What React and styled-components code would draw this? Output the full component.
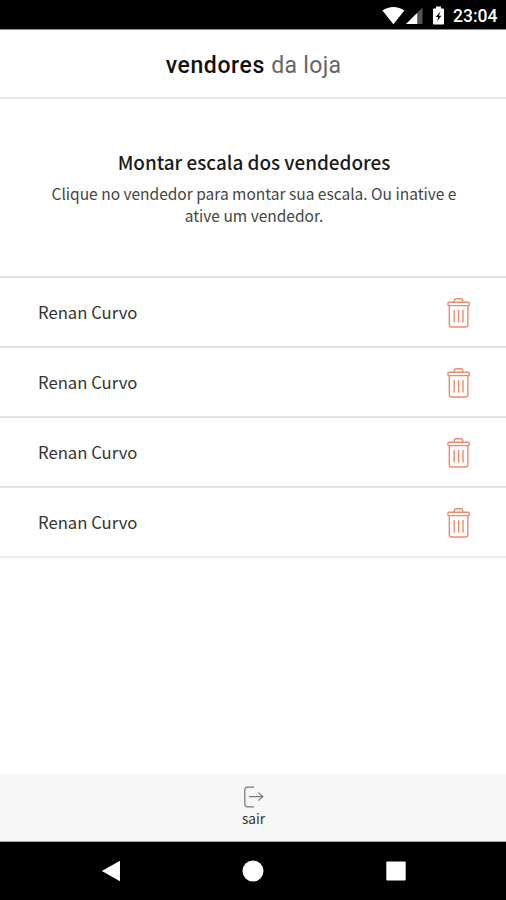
// App.jsx
import React from "react";
import styled, { createGlobalStyle } from "styled-components";

const GlobalStyle = createGlobalStyle`
  * {
    box-sizing: border-box;
  }

  body {
    margin: 0;
    background-color: #ffffff;
    font-family: "Noto Sans CJK JP", "Noto Sans", sans-serif;
  }
`;

const Screen = styled.div`
  display: flex;
  flex-direction: column;
  height: 900px;
  overflow: hidden;
`;

const StatusBar = styled.div`
  display: flex;
  align-items: center;
  justify-content: flex-end;
  height: 30px;
  padding: 2px 8px 0 0;
  background-color: #000000;
  border-bottom: 1px solid #888888;
  color: #ffffff;

  svg {
    display: block;
  }
`;

const Clock = styled.span`
  width: 45px;
  margin-left: 7px;
  font-family: Roboto, sans-serif;
  font-size: 17.5px;
  font-weight: 500;
  line-height: 20px;
  white-space: nowrap;
`;

const Header = styled.header`
  display: flex;
  align-items: center;
  justify-content: center;
  height: 69px;
  padding-top: 4px;
  border-bottom: 2px solid #e8e8e8;
`;

const Title = styled.h1`
  margin: 0 0 0 1px;
  color: #111111;
  font-family: Roboto, sans-serif;
  font-size: 23px;
  font-weight: 500;
  letter-spacing: 0.6px;
  line-height: 28px;
  white-space: nowrap;

  span {
    color: #666666;
    font-weight: 400;
    letter-spacing: 0.3px;
  }
`;

const Intro = styled.section`
  height: 177px;
  padding: 49px 40px 0;
  text-align: center;
`;

const H2 = styled.h2`
  margin: 0 0 6px 2px;
  color: #1a1a1a;
  font-size: 18.9px;
  font-weight: 500;
  line-height: 28px;
  white-space: nowrap;
`;

const P = styled.p`
  margin: 0 0 0 2px;
  color: #444444;
  font-size: 15.5px;
  font-weight: 400;
  line-height: 22px;
`;

const List = styled.ul`
  flex: 1;
  margin: 0;
  padding: 0;
  list-style: none;
`;

const Row = styled.li`
  display: flex;
  align-items: center;
  justify-content: space-between;
  height: ${(props) => (props.$first ? 72 : 70)}px;
  padding: 2px 35px 0 38px;
  border-top: ${(props) => (props.$first ? "2px solid #e2e2e2" : "none")};
  border-bottom: 2px solid ${(props) => (props.$last ? "#ececec" : "#e2e2e2")};
`;

const Name = styled.span`
  margin-top: -3px;
  color: #333333;
  font-size: 16.7px;
  line-height: 26px;
`;

const DeleteButton = styled.button`
  display: flex;
  margin: 0;
  padding: 0;
  background: none;
  border: none;
`;

const Footer = styled.footer`
  display: flex;
  justify-content: center;
  height: 68px;
  background-color: #f7f7f7;
  border-bottom: 1px solid #aaaaaa;
`;

const ExitButton = styled.button`
  display: flex;
  flex-direction: column;
  align-items: center;
  padding: 12px 0 0 1px;
  background: none;
  border: none;
  color: #333333;
  font-family: inherit;
  font-size: 13.6px;
  line-height: 21px;
`;

const NavBar = styled.nav`
  display: flex;
  align-items: center;
  justify-content: space-between;
  height: 58px;
  padding: 0 100px 0 101px;
  background-color: #000000;
`;

const StatusIcons = () => (
  <svg width="64" height="22" viewBox="0 0 64 22" fill="#fff">
    <path d="M0.4 5.6C6.8.8 16 .8 22.4 5.6L11.4 19.2Z" />
    <path d="M40.5 2.6V19H24Z" fill="#555" />
    <path d="M35.2 8V19H24Z" />
    <path d="M54 1.5h5v2h2.2q.8 0 .8.8V18.7q0 .8-.8.8h-9.4q-.8 0-.8-.8V4.3q0-.8.8-.8H54Z" />
    <path d="M58.5 6.2L53.8 12h2.4l-.9 4.3 4.1-5.5h-2.5Z" fill="#000" />
  </svg>
);

const TrashIcon = () => (
  <svg
    width="24"
    height="32"
    viewBox="0 0 24 32"
    fill="none"
    stroke="#f08a6a"
    strokeWidth="1.4"
  >
    <rect x="0.9" y="5.2" width="21.4" height="3.4" rx="1.2" />
    <path d="M7.3 5.1V3.8Q7.3 1.8 9.3 1.8h4.4q2 0 2 2v1.3" />
    <path d="M2.3 8.6V27.4q0 2.6 2.6 2.6H18.3q2.6 0 2.6-2.6V8.6" />
    <path d="M7.2 13V25.6M11.6 13V25.6M16 13V25.6" />
  </svg>
);

const ExitIcon = () => (
  <svg
    width="20"
    height="22"
    viewBox="0 0 20 22"
    fill="none"
    stroke="#777"
    strokeWidth="1.2"
  >
    <path d="M10 1.2H3.6Q.8 1.2.8 4V18q0 2.8 2.8 2.8H10" />
    <path d="M5.2 10.6H18.8M14.4 6.6L18.8 10.6l-4.4 4" />
  </svg>
);

const sellers = ["Renan Curvo", "Renan Curvo", "Renan Curvo", "Renan Curvo"];

const App = () => {
  return (
    <>
      <GlobalStyle />
      <Screen>
        <StatusBar>
          <StatusIcons />
          <Clock>23:04</Clock>
        </StatusBar>

        <Header>
          <Title>
            vendores <span>da loja</span>
          </Title>
        </Header>

        <Intro>
          <H2>Montar escala dos vendedores</H2>
          <P>
            Clique no vendedor para montar sua escala. Ou inative e ative um
            vendedor.
          </P>
        </Intro>

        <List>
          {sellers.map((name, index) => (
            <Row
              key={index}
              $first={index === 0}
              $last={index === sellers.length - 1}
            >
              <Name>{name}</Name>
              <DeleteButton aria-label="Remover">
                <TrashIcon />
              </DeleteButton>
            </Row>
          ))}
        </List>

        <Footer>
          <ExitButton>
            <ExitIcon />
            sair
          </ExitButton>
        </Footer>

        <NavBar>
          <svg width="19" height="22" viewBox="0 0 19 22" fill="#fff">
            <path d="M19 .8V21.2L.8 11Z" />
          </svg>
          <svg width="22" height="22" viewBox="0 0 22 22" fill="#fff">
            <circle cx="11" cy="11" r="10.5" />
          </svg>
          <svg width="20" height="20" viewBox="0 0 20 20" fill="#fff">
            <rect x="0.3" y="0.5" width="19.4" height="19" rx="1" />
          </svg>
        </NavBar>
      </Screen>
    </>
  );
};

export default App;
